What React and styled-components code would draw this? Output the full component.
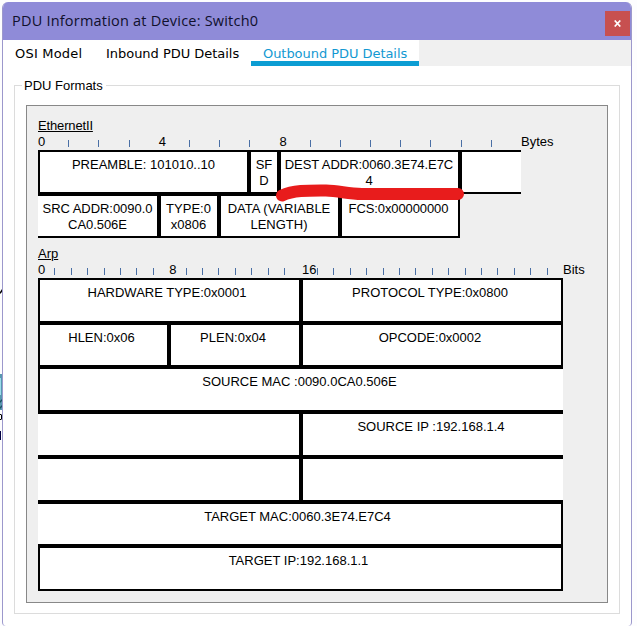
import React from 'react';
import styled, { createGlobalStyle } from 'styled-components';

const GlobalStyle = createGlobalStyle`
  * { box-sizing: border-box; }
  html, body { margin: 0; background: #fdfdfe; overflow: hidden; }
`;

const Desktop = styled.div`
  display: grid;
  grid-template-columns: 2px 630px 5px;
  width: 637px;
  height: 626px;
  padding-top: 2px;
  font-family: 'Liberation Sans', Arial, sans-serif;
  font-size: 13px;
  color: #000;
`;

const Backdrop = styled.svg`
  display: block;
  width: 2px;
  height: 624px;
`;

const Window = styled.main`
  display: flex;
  flex-direction: column;
  height: 624px;
  border: 1px solid #9c98cc;
  border-top: 0;
  border-bottom: 0;
  border-radius: 6px 6px 4px 4px;
  background: #fff;
  overflow: hidden;
`;

const TitleBar = styled.header`
  display: flex;
  flex: none;
  align-items: flex-start;
  justify-content: space-between;
  height: 38px;
  margin: 0 -1px;
  padding: 9px 2px 0 10px;
  background: #8f8bd8;
`;

const Title = styled.h1`
  margin: 0;
  font: 400 14.5px/20px 'Open Sans', 'Noto Sans', sans-serif;
  letter-spacing: 0.21px;
  color: #10102c;
  white-space: nowrap;
`;

const CloseButton = styled.button`
  display: grid;
  place-items: center;
  width: 25px;
  height: 25px;
  padding: 0;
  border: 0;
  background: #c75050;
`;

const TabBar = styled.nav`
  display: flex;
  flex: none;
  height: 26px;
  background: #f0f0f0;
`;

const Tab = styled.button`
  display: flex;
  align-items: flex-start;
  width: ${(p) => p.$width}px;
  height: 26px;
  padding: 4px 0 0 ${(p) => p.$inset}px;
  border: 0;
  border-bottom: ${(p) => (p.$active ? '5px solid #0c9dd3' : '0')};
  background: #fff;
  color: ${(p) => (p.$active ? '#1299d2' : '#000')};
  font: 13px/20px 'DejaVu Sans', Verdana, sans-serif;
  letter-spacing: ${(p) => p.$spacing}px;
  white-space: nowrap;
`;

const GroupBox = styled.fieldset`
  width: 606px;
  height: 537px;
  margin: 11px 0 0 11px;
  padding: 11px 0 0 11px;
  border: 1px solid #dcdcdc;
`;

const Legend = styled.legend`
  height: 17px;
  margin-left: -4px;
  padding: 0 3px 0 2px;
  line-height: 17px;
`;

const Panel = styled.section`
  width: 582px;
  height: 498px;
  padding: 12px 0 0 11px;
  border: 1px solid #888;
  background: #efefef;
`;

const Heading = styled.h2`
  height: 16px;
  margin: 0;
  font-size: 13px;
  font-weight: 400;
  line-height: 16px;
  letter-spacing: ${(p) => p.$spacing || 0}px;
  text-decoration: underline;
  text-underline-offset: 1px;
`;

const Ruler = styled.div`
  display: grid;
  grid-template-columns: repeat(${(p) => p.$count}, ${(p) => p.$step}px) auto;
  height: 16px;
  line-height: 16px;
  white-space: nowrap;
`;

const Mark = styled.span`
  width: 0;
  padding-left: ${(p) => (p.$wide ? 1.5 : 0)}px;
`;

const Tick = styled.span`
  width: 1px;
  height: 7px;
  margin-top: 6px;
  background: #4a6fa5;
`;

const Header = styled.article`
  display: flex;
  flex-direction: column;
  margin-bottom: ${(p) => p.$gap || 0}px;
`;

const Row = styled.div`
  display: flex;
  height: ${(p) => p.$height}px;
`;

const Cell = styled.div`
  flex: none;
  width: ${(p) => p.$width}px;
  padding-top: 5px;
  padding-right: ${(p) => p.$shift}px;
  border: 2px solid #000;
  border-left-width: ${(p) => (p.$open.includes('l') ? 0 : 2)}px;
  border-right-width: ${(p) => (p.$open.includes('r') ? 0 : 2)}px;
  background: #fff;
  line-height: 16px;
  text-align: center;
  white-space: pre;
  letter-spacing: ${(p) => p.$spacing}px;
`;

const Annotated = styled.div`
  position: relative;
`;

const Marker = styled.svg`
  position: absolute;
  left: 236px;
  top: 32px;
  width: 194px;
  height: 22px;
`;

const ethernetRows = [
  { height: 44, cells: [
    { width: 211, text: 'PREAMBLE: 101010..10' },
    { width: 30, text: 'SF\nD' },
    { width: 181, text: 'DEST ADDR:0060.3E74.E7C\n4', shift: 1, spacing: -0.05 },
    { width: 61, text: '', open: 'r' },
  ] },
  { height: 44, cells: [
    { width: 121, text: 'SRC ADDR:0090.0\nCA0.506E', open: 'l', spacing: -0.05 },
    { width: 60, text: 'TYPE:0\nx0806', shift: 1 },
    { width: 121, text: 'DATA (VARIABLE\nLENGTH)', shift: 1 },
    { width: 120, text: 'FCS:0x00000000', shift: 3, spacing: -0.1 },
  ] },
];

const arpRows = [
  { height: 45, cells: [
    { width: 263, text: 'HARDWARE TYPE:0x0001', shift: 5 },
    { width: 262, text: 'PROTOCOL TYPE:0x0800' },
  ] },
  { height: 44, cells: [
    { width: 131, text: 'HLEN:0x06' },
    { width: 132, text: 'PLEN:0x04' },
    { width: 262, text: 'OPCODE:0x0002' },
  ] },
  { height: 45, cells: [{ width: 525, text: 'SOURCE MAC :0090.0CA0.506E', open: 'r' }] },
  { height: 45, cells: [
    { width: 263, text: '', open: 'l' },
    { width: 262, text: 'SOURCE IP :192.168.1.4', open: 'r' },
  ] },
  { height: 45, cells: [
    { width: 263, text: '', open: 'l' },
    { width: 262, text: '', open: 'r' },
  ] },
  { height: 44, cells: [{ width: 525, text: 'TARGET MAC:0060.3E74.E7C4', open: 'l' }] },
  { height: 45, cells: [{ width: 525, text: 'TARGET IP:192.168.1.1' }] },
];

function Scale({ count, step, every, last, unit }) {
  return (
    <Ruler $count={count} $step={step}>
      {Array.from({ length: count }, (_, i) =>
        i % every === 0 && i <= last ? <Mark key={i} $wide={i > 9}>{i}</Mark> : <Tick key={i} />
      )}
      <span>{unit}</span>
    </Ruler>
  );
}

function Rows({ rows, shift = 0 }) {
  return rows.map((row, r) => (
    <Row key={r} $height={row.height}>
      {row.cells.map((cell, c) => (
        <Cell
          key={c}
          $width={cell.width}
          $open={cell.open || ''}
          $spacing={cell.spacing || 0}
          $shift={cell.shift || shift}
        >
          {cell.text}
        </Cell>
      ))}
    </Row>
  ));
}

export default function App() {
  return (
    <>
      <GlobalStyle />
      <Desktop>
        <Backdrop viewBox="0 0 2 624" aria-hidden="true">
          <path d="M0 290L2 287V290L0 292Z" fill="#000" />
          <path d="M0 372H2V408H0Z" fill="#5897b0" />
          <path d="M0 376H1V393H0Z" fill="#9cdcec" />
          <path d="M0 399L2 397V399L0 401ZM0 405L2 403V405L0 407Z" fill="#1b5063" />
          <path d="M0 412H1L2 413V417L1 418H0V417H1V413H0Z" fill="#000" />
          <path d="M0 429H1V438H0Z" fill="#000040" />
        </Backdrop>
        <Window>
          <TitleBar>
            <Title>PDU Information at Device: Switch0</Title>
            <CloseButton aria-label="Close">
              <svg width="7" height="7" viewBox="0 0 7 7">
                <path d="M0.7 0.5L6.3 6.5M6.3 0.5L0.7 6.5" stroke="#fff" strokeWidth="1.7" />
              </svg>
            </CloseButton>
          </TitleBar>
          <TabBar>
            <Tab $width={93} $inset={12} $spacing={0.2}>OSI Model</Tab>
            <Tab $width={155} $inset={10} $spacing={-0.03}>Inbound PDU Details</Tab>
            <Tab $width={168} $inset={12} $spacing={-0.05} $active>Outbound PDU Details</Tab>
          </TabBar>
          <GroupBox>
            <Legend>PDU Formats</Legend>
            <Panel>
              <Header $gap={8}>
                <Heading $spacing={-0.15}>EthernetII</Heading>
                <Scale count={16} step={30.1875} every={4} last={8} unit="Bytes" />
                <Annotated>
                  <Rows rows={ethernetRows} />
                  <Marker viewBox="0 0 194 22">
                    <path
                      d="M8 13.5C20 8 36 8.5 52 8.5C66 9 74 12 88 12H184"
                      fill="none"
                      stroke="#e81c1c"
                      strokeWidth="12"
                      strokeLinecap="round"
                      strokeLinejoin="round"
                    />
                  </Marker>
                </Annotated>
              </Header>
              <Header>
                <Heading>Arp</Heading>
                <Scale count={32} step={16.40625} every={8} last={16} unit="Bits" />
                <Rows rows={arpRows} shift={4} />
              </Header>
            </Panel>
          </GroupBox>
        </Window>
      </Desktop>
    </>
  );
}
